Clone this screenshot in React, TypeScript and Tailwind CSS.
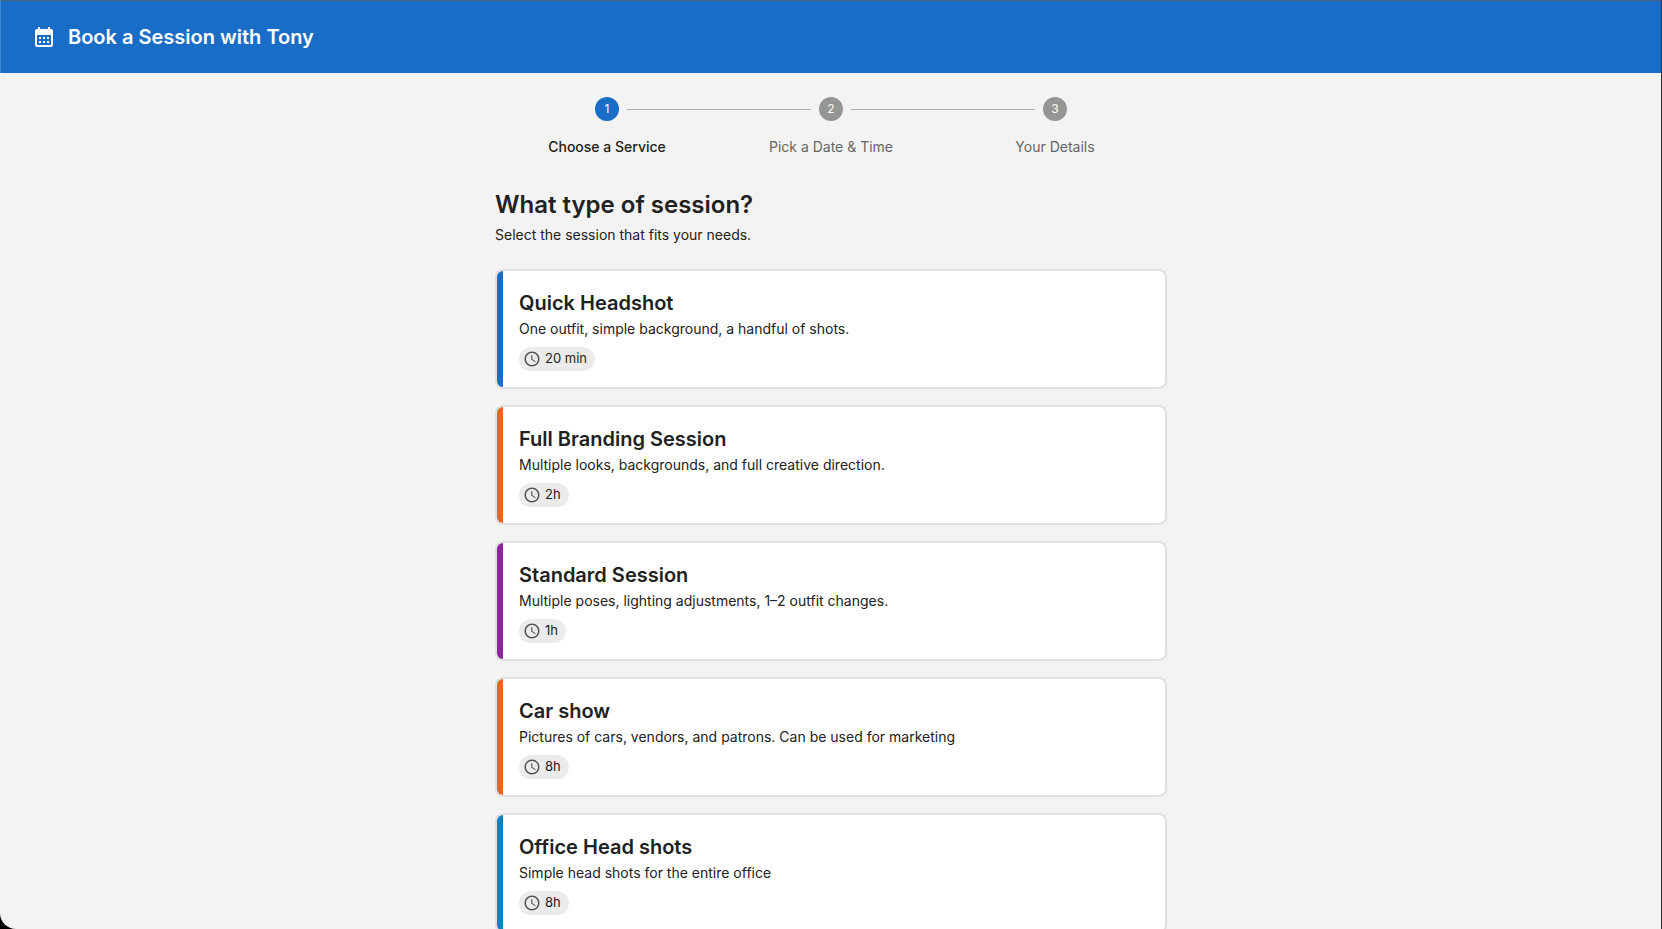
import { MdAccessTime, MdCalendarMonth } from "react-icons/md"

interface IService {
    name: string;
    description: string;
    duration: string;
    color: string;
}

const steps = ["Choose a Service", "Pick a Date & Time", "Your Details"]

const services: IService[] = [
    { name: `Quick Headshot`, description: `One outfit, simple background, a handful of shots.`, duration: `20 min`, color: `bg-[#196dc7]` },
    { name: `Full Branding Session`, description: `Multiple looks, backgrounds, and full creative direction.`, duration: `2h`, color: `bg-[#e8641f]` },
    { name: `Standard Session`, description: `Multiple poses, lighting adjustments, 1–2 outfit changes.`, duration: `1h`, color: `bg-[#8e24a0]` },
    { name: `Car show`, description: `Pictures of cars, vendors, and patrons. Can be used for marketing`, duration: `8h`, color: `bg-[#e8641f]` },
    { name: `Office Head shots`, description: `Simple head shots for the entire office`, duration: `8h`, color: `bg-[#0f82c4]` },
]

const Stepper = ({ active }: { active: number }) => (
    <ol className="flex">
        {steps.map((label, index) => (
            <li key={label} className="relative flex flex-1 flex-col items-center gap-4" aria-current={index === active ? "step" : undefined}>
                {/* connector to the previous step */}
                {index > 0 && <span className="absolute top-3 left-[calc(-50%+20px)] right-[calc(50%+20px)] h-px bg-[#aab0ae]" />}
                <span className={`flex size-6 items-center justify-center rounded-full text-xs text-white ${index === active ? "bg-[#196dc7]" : "bg-[#959595]"}`}>
                    {index + 1}
                </span>
                <span className={`text-sm ${index === active ? "font-medium text-[#212121]" : "text-[#666666]"}`}>{label}</span>
            </li>
        ))}
    </ol>
)

const ServiceCard = ({ service }: { service: IService }) => (
    <button type="button" className="flex w-full overflow-hidden rounded-lg border-2 border-[#e0e0e0] bg-white text-left">
        <span className={`w-[6px] shrink-0 self-stretch ${service.color}`} />
        <span className="flex flex-1 flex-col items-start p-4">
            <span className="text-xl/8 font-semibold">{service.name}</span>
            <span className="text-sm">{service.description}</span>
            <span className="mt-2 flex h-6 items-center gap-1 rounded-full bg-[#ebebeb] pr-2 pl-1 text-[13px]">
                <MdAccessTime className="size-[18px] text-[#555555]" />
                {service.duration}
            </span>
        </span>
    </button>
)

const App = () => {
    return (
        <div className="relative h-screen bg-black font-['Inter','Liberation_Sans',sans-serif] text-[#212121]">
            <div className="flex h-full flex-col overflow-hidden rounded-bl-2xl bg-[#f3f3f3]">
                <header className="flex h-[73px] shrink-0 items-center gap-3 border-t border-l border-t-[#4a6378] border-l-[#3d87d6] bg-[#196dc7] pr-8 pl-[31px] text-white">
                    <MdCalendarMonth className="size-6" />
                    <span className="text-xl font-semibold">Book a Session with Tony</span>
                </header>

                <main className="min-h-0 flex-1 overflow-y-auto [scrollbar-width:none]">
                    <div className="mx-auto max-w-[720px] p-6">
                        <Stepper active={0} />
                        <h1 className="mt-8 text-2xl font-semibold">What type of session?</h1>
                        <p className="mt-1 text-sm">Select the session that fits your needs.</p>
                        <div className="mt-6 flex flex-col gap-4">
                            {services.map(service => <ServiceCard key={service.name} service={service} />)}
                        </div>
                    </div>
                </main>
            </div>
            {/* window edge */}
            <div className="pointer-events-none absolute inset-y-0 right-0 w-px bg-[#333333]" />
        </div>
    )
}
export default App
